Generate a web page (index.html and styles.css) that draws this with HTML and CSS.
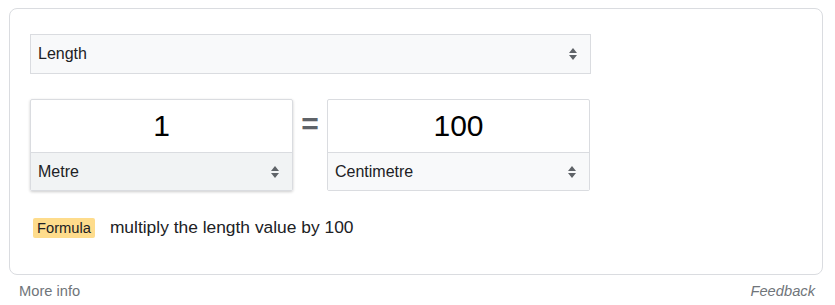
FILE: index.html
```html
<!DOCTYPE html>
<html lang="en">
<head>
    <meta charset="UTF-8">
    <title>Unit converter</title>
    <link rel="stylesheet" href="styles.css">
</head>
<body>

<div class="page">
    <!-- converter card -->
    <div class="card">
        <div class="select select-wide">
            <span>Length</span>
            <svg class="arrows" width="10" height="14" viewBox="0 0 10 14"><path d="M1 6h8L5 1z M1 8h8l-4 5z"/></svg>
        </div>

        <div class="converter">
            <div class="unit-box focused">
                <div class="value">1</div>
                <div class="select">
                    <span>Metre</span>
                    <svg class="arrows" width="10" height="14" viewBox="0 0 10 14"><path d="M1 6h8L5 1z M1 8h8l-4 5z"/></svg>
                </div>
            </div>
            <div class="equals">=</div>
            <div class="unit-box">
                <div class="value">100</div>
                <div class="select">
                    <span>Centimetre</span>
                    <svg class="arrows" width="10" height="14" viewBox="0 0 10 14"><path d="M1 6h8L5 1z M1 8h8l-4 5z"/></svg>
                </div>
            </div>
        </div>

        <div class="formula">
            <span class="tag">Formula</span>
            <span class="formula-text">multiply the length value by 100</span>
        </div>
    </div>

    <div class="footer">
        <a href="#">More info</a>
        <a href="#" class="feedback">Feedback</a>
    </div>
</div>

</body>
</html>
```

FILE: styles.css
```css
body {
    margin: 0;
    font-family: Arial, 'Liberation Sans', sans-serif;
    color: #202124;
    background: #fff;
}

.page {
    padding: 8px 12px 0 9px;
}

.card {
    border: 1px solid #dadce0;
    border-radius: 8px;
    padding: 25px 20px 0 20px;
    height: 240px;
}

.select {
    display: flex;
    align-items: center;
    justify-content: space-between;
    background-color: #f8f9fa;
    border: 1px solid #dadce0;
    height: 38px;
    padding: 0 12px 0 7px;
    font-size: 16px;
    color: #202124;
}

.select-wide {
    width: 540px;
}

.arrows {
    fill: #5f6368;
}

.converter {
    display: flex;
    align-items: flex-start;
    margin-top: 25px;
}

.unit-box {
    width: 261px;
    border: 1px solid #dadce0;
    border-radius: 2px;
}

.unit-box .select {
    border: none;
    border-top: 1px solid #dadce0;
    height: 37px;
}

.unit-box.focused {
    box-shadow: 0 1px 3px rgba(0, 0, 0, 0.2);
}

.unit-box.focused .select {
    background-color: #f1f3f4;
}

.value {
    height: 52px;
    line-height: 52px;
    text-align: center;
    font-size: 30px;
    color: #000;
}

.equals {
    width: 34px;
    text-align: center;
    font-size: 30px;
    font-weight: bold;
    color: #5f6368;
    line-height: 50px;
}

.formula {
    display: flex;
    align-items: center;
    margin-top: 26px;
    padding-left: 3px;
}

.tag {
    background-color: #fedc8c;
    border-radius: 2px;
    font-size: 14.7px;
    padding: 0 4px;
    height: 20px;
    line-height: 20px;
}

.formula-text {
    font-size: 17.4px;
    margin-left: 15px;
}

.footer {
    display: flex;
    justify-content: space-between;
    padding: 8px 8px 0 10px;
    font-size: 14.7px;
}

.footer a {
    color: #70757a;
    text-decoration: none;
}

.footer .feedback {
    font-style: italic;
}
```
